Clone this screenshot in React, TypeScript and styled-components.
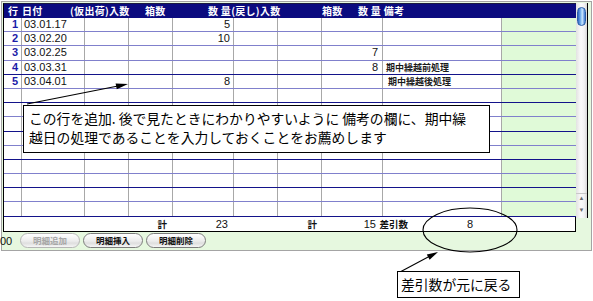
import React from "react";
import styled, { createGlobalStyle } from "styled-components";

const JP = `"Noto Sans CJK JP", "Liberation Sans", sans-serif`;
const COLS = "17px 63px 44px 44px 61px 44px 44px 61px 119px 75px";

const GlobalStyle = createGlobalStyle`
	html, body {
		margin: 0;
		padding: 0;
		background: #ffffff;
	}
	body {
		width: 593px;
		height: 301px;
		overflow: hidden;
		font-family: "Liberation Sans", "Noto Sans CJK JP", sans-serif;
	}
`;

const Page = styled.div`
	position: relative;
	width: 593px;
	height: 301px;
	padding: 1px 0 0 1px;
	box-sizing: border-box;
`;

const Window = styled.div`
	width: 591px;
	box-sizing: border-box;
	border: 1px solid #a4a4a4;
	background: #e6f8df;
`;

const Panel = styled.div`
	display: flex;
	align-items: flex-start;
	margin: 1px 0 0 1px;
`;

const TableArea = styled.div`
	width: 572px;
	border-left: 1px solid #000;
	border-top: 1px solid #1a1a40;
	background: #ffffff;
`;

// header labels do not follow the body columns, so it has its own track list
const Header = styled.div`
	display: grid;
	grid-template-columns: 14px 48px 75px 63px 114px 36px 1fr;
	align-items: center;
	height: 14px;
	padding-left: 4px;
	background: #0b0b7f;
	color: #ffffff;
	font-family: ${ JP };
	font-size: 10px;
	font-weight: 700;
	line-height: 14px;
	white-space: nowrap;
`;

const HeadLabel = styled.span`
	overflow: visible;
	letter-spacing: 0.3px;
`;

const Row = styled.div<{ $dark?: boolean }>`
	display: grid;
	grid-template-columns: ${ COLS };
	height: 14.2px;
	box-sizing: border-box;
	border-bottom: 1px solid ${ p => p.$dark ? "#13138a" : "#8080cc" };
`;

const Cell = styled.div<{ $first?: boolean; $green?: boolean; $right?: boolean; $pad?: number }>`
	box-sizing: border-box;
	border-left: ${ p => p.$first ? "none" : "1px solid #a8a8a8" };
	background: ${ p => p.$green ? "#e0fad8" : "transparent" };
	text-align: ${ p => p.$right ? "right" : "left" };
	padding: ${ p => p.$right ? `0 ${ p.$pad ?? 3 }px 0 0` : `0 0 0 ${ p.$pad ?? 2 }px` };
	font-size: 11px;
	line-height: 13px;
	color: #111;
	white-space: nowrap;
	overflow: visible;
`;

const RowNo = styled(Cell)`
	color: #1c1ca8;
	font-weight: 700;
`;

const Note = styled.span`
	font-family: ${ JP };
	font-size: 9px;
	font-weight: 700;
	color: #1a1a1a;
`;

const TotalsRow = styled.div`
	display: flex;
	height: 15px;
	box-sizing: border-box;
	border-right: 1px solid #000;
	border-bottom: 1px solid #000;
	background: #ffffff;
`;

const Total = styled.span<{ $w: number; $jp?: boolean }>`
	flex: 0 0 ${ p => p.$w }px;
	text-align: right;
	font-family: ${ p => p.$jp ? JP : `"Liberation Sans", sans-serif` };
	font-size: ${ p => p.$jp ? "9.5px" : "11px" };
	font-weight: ${ p => p.$jp ? 700 : 400 };
	line-height: 14px;
	color: #111;
	white-space: nowrap;
`;

const Scrollbar = styled.div`
	display: flex;
	flex-direction: column;
	justify-content: space-between;
	width: 11px;
	height: 215px;
	border-right: 1px solid #000;
	background: linear-gradient(to right, #e2e2e2, #fbfbfb 45%, #f2f2f2 75%, #d8d8d8);
`;

const Thumb = styled.div`
	margin: 4px 0 0 1px;
	width: 9px;
	height: 19px;
	border-radius: 5px;
	border: 1px solid #2c5fa8;
	box-sizing: border-box;
	background: linear-gradient(to right, #2a62c4, #8cc4f4 45%, #cfeaff 60%, #3a78d0);
`;

const ArrowBox = styled.div`
	display: flex;
	flex-direction: column;
	align-items: center;
	padding-bottom: 3px;
	gap: 3px;
	font-size: 6px;
	line-height: 9px;
	color: #6a6a6a;
	border-top: 1px solid #c8c8c8;
`;

const ButtonBar = styled.div`
	display: flex;
	align-items: center;
	height: 18px;
	gap: 3px;
`;

const FieldEnd = styled.span`
	margin: 0 2px 0 -2px;
	font-size: 11px;
	color: #111;
	width: 15px;
	overflow: hidden;
`;

const PillButton = styled.button<{ $disabled?: boolean }>`
	width: 60px;
	height: 15px;
	padding: 0;
	border: 1px solid ${ p => p.$disabled ? "#b6b6b6" : "#7c7c7c" };
	border-radius: 8px;
	background: linear-gradient(#ffffff, #ececec 55%, #dedede 70%, #f6f6f6);
	color: ${ p => p.$disabled ? "#a6a6a6" : "#111" };
	font-family: ${ JP };
	font-size: 8.5px;
	font-weight: 700;
	line-height: 13px;
`;

const Overlay = styled.svg`
	position: absolute;
	left: 0;
	top: 0;
	pointer-events: none;
`;

const Callout = styled.div<{ $x: number; $y: number; $w: number; $h: number; $pad?: number }>`
	position: absolute;
	left: ${ p => p.$x }px;
	top: ${ p => p.$y }px;
	width: ${ p => p.$w }px;
	height: ${ p => p.$h }px;
	box-sizing: border-box;
	padding: 3px 0 0 ${ p => p.$pad ?? 5 }px;
	border: 1px solid #000;
	background: #ffffff;
	font-family: ${ JP };
	font-size: 13.8px;
	line-height: 19px;
	color: #000;
	white-space: nowrap;
`;

type Line = { no?: number; date?: string; qty?: string; qty2?: string; note?: string; notePad?: number };

const rows: Line[] = [
	{ no: 1, date: "03.01.17", qty: "5" },
	{ no: 2, date: "03.02.20", qty: "10" },
	{ no: 3, date: "03.02.25", qty2: "7" },
	{ no: 4, date: "03.03.31", qty2: "8", note: "期中繰越前処理" },
	{ no: 5, date: "03.04.01", qty: "8", note: "期中繰越後処理", notePad: 5 },
	{}, {}, {}, {}, {}, {}, {}, {}, {},
];

const App = () => {
	return (
		<Page>
			<GlobalStyle />
			<Window>
				<Panel>
					<TableArea>
						<Header>
							<HeadLabel>{ "行" }</HeadLabel>
							<HeadLabel>{ "日付" }</HeadLabel>
							<HeadLabel>{ "(仮出荷)入数" }</HeadLabel>
							<HeadLabel>{ "箱数" }</HeadLabel>
							<HeadLabel>{ "数\u00a0量(戻し)入数" }</HeadLabel>
							<HeadLabel>{ "箱数" }</HeadLabel>
							<HeadLabel>{ "数\u00a0量\u00a0備考" }</HeadLabel>
						</Header>
						{ rows.map((r, i) => (
							<Row key={ i } $dark={ i >= 3 && i % 2 === 1 }>
								<RowNo $first $right>{ r.no ?? "" }</RowNo>
								<Cell>{ r.date ?? "" }</Cell>
								<Cell />
								<Cell />
								<Cell $right>{ r.qty ?? "" }</Cell>
								<Cell />
								<Cell />
								<Cell $right $pad={ 4 }>{ r.qty2 ?? "" }</Cell>
								<Cell $pad={ r.notePad ?? 3 }>{ r.note && <Note>{ r.note }</Note> }</Cell>
								<Cell $green />
							</Row>
						)) }
						<TotalsRow>
							<Total $w={ 163 } $jp>{ "計" }</Total>
							<Total $w={ 61 }>{ "23" }</Total>
							<Total $w={ 89 } $jp>{ "計" }</Total>
							<Total $w={ 59 }>{ "15" }</Total>
							<Total $w={ 32 } $jp>{ "差引数" }</Total>
							<Total $w={ 65 }>{ "8" }</Total>
						</TotalsRow>
					</TableArea>
					<Scrollbar>
						<Thumb />
						<ArrowBox>
							<span>{ "▲" }</span>
							<span>{ "▼" }</span>
						</ArrowBox>
					</Scrollbar>
				</Panel>
				<ButtonBar>
					<FieldEnd>{ "00" }</FieldEnd>
					<PillButton $disabled>{ "明細追加" }</PillButton>
					<PillButton>{ "明細挿入" }</PillButton>
					<PillButton>{ "明細削除" }</PillButton>
				</ButtonBar>
			</Window>

			<Overlay width={ 593 } height={ 301 } viewBox="0 0 593 301">
				<line x1={ 27 } y1={ 104 } x2={ 118 } y2={ 86 } stroke="#000" strokeWidth={ 1.2 } />
				<polygon points="128,84 116.8,89.3 115.6,83.4" fill="#000" />
				<ellipse cx={ 470 } cy={ 230 } rx={ 47 } ry={ 22 } fill="none" stroke="#000" strokeWidth={ 1.1 } />
				<line x1={ 400 } y1={ 272 } x2={ 430 } y2={ 256 } stroke="#000" strokeWidth={ 1.1 } />
				<polygon points="438,252 429.6,259.8 426.8,254.5" fill="#000" />
			</Overlay>

			<Callout $x={ 23 } $y={ 105 } $w={ 467 } $h={ 48 }>
				<div>{ "この行を追加. 後で見たときにわかりやすいように 備考の欄に、期中繰" }</div>
				<div>{ "越日の処理であることを入力しておくことをお薦めします" }</div>
			</Callout>
			<Callout $x={ 397 } $y={ 271 } $w={ 123 } $h={ 27 } $pad={ 3 }>
				{ "差引数が元に戻る" }
			</Callout>
		</Page>
	);
};

export default App;
